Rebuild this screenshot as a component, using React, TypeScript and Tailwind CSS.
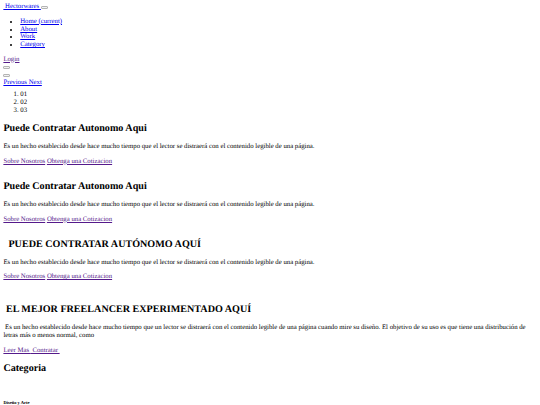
import React from "react";

const Btn = () => (
  <button className="inline-block align-baseline w-[7px] h-[3px] border border-[#b4b4b4] bg-[#f2f2f2] rounded-[1px] p-0" />
);

const blue = "text-[#0000ee] underline";
const purple = "text-[#551a8b] underline";
const h2 = "text-[10.125px] leading-[11.64px] font-bold my-[8.4px]";

const para =
  "Es un hecho establecido desde hace mucho tiempo que el lector se distraerá con el contenido legible de una página.";

function Slide({ title, mb }: { title: string; mb: string }) {
  return (
    <div>
      <h2 className={h2}>{title}</h2>
      <p className="my-[6.75px]">{para}</p>
      <p className={`mt-[6.75px] ${mb}`}>
        <a href="#" className={purple}>
          Sobre Nosotros
        </a>{" "}
        <a href="#" className={purple}>
          Obtenga una Cotizacion
        </a>
      </p>
    </div>
  );
}

export default function App() {
  return (
    <div className="bg-white text-black font-['Liberation_Serif',serif] [text-rendering:geometricPrecision] text-[6.75px] leading-[7.76px] pt-[3.375px] pl-[3.375px] pr-[10px] h-[405px] overflow-hidden">
      <nav>
        <div>
          <a href="#" className={blue}>
            {"\u00a0Hectorwares\u00a0"}
          </a>
          <Btn />
        </div>
        <ul className="list-disc pl-[16.875px] my-[6.75px]">
          <li>
            <a href="#" className={blue}>
              Home (current)
            </a>
          </li>
          <li>
            <a href="#" className={blue}>
              About
            </a>
          </li>
          <li>
            <a href="#" className={blue}>
              Work
            </a>
          </li>
          <li>
            <a href="#" className={blue}>
              Category
            </a>
          </li>
        </ul>
        <div>
          <a href="#" className={purple}>
            Login
          </a>
        </div>
      </nav>
      <div>
        <div>
          <Btn />
        </div>
        <div>
          <Btn />
        </div>
        <div>
          <a href="#" className={blue}>
            Previous Next
          </a>
        </div>
        <ol className="list-decimal pl-[16.875px] mt-[4.5px] mb-[6.75px]">
          <li>01</li>
          <li>02</li>
          <li>03</li>
        </ol>
        <Slide title="Puede Contratar Autonomo Aqui" mb="mb-[16px]" />
        <Slide title="Puede Contratar Autonomo Aqui" mb="mb-[15px]" />
        <Slide title={"\u00a0 PUEDE CONTRATAR AUTÓNOMO AQUÍ"} mb="mb-[23px]" />
        <div>
          <h2 className={h2}>{"\u00a0EL MEJOR FREELANCER EXPERIMENTADO AQUÍ"}</h2>
          <p className="mt-[7.3px] mb-[7.5px]">
            {"\u00a0Es un hecho establecido desde hace mucho tiempo que un lector se distraerá con el contenido legible de una página cuando mire su diseño. El objetivo de su uso es que tiene una distribución de letras más o menos normal, como"}
          </p>
          <p className="my-[6.75px]">
            <a href="#" className={purple}>
              {"Leer Mas\u00a0"}
            </a>
            <a href="#" className={purple}>
              {"\u00a0Contratar\u00a0"}
            </a>
          </p>
        </div>
      </div>
      <section>
        <h2 className={h2}>Categoria</h2>
        <h6 className="text-[4.52px] leading-[5.2px] font-bold mt-[25.6px]">Diseño y Arte</h6>
      </section>
    </div>
  );
}
